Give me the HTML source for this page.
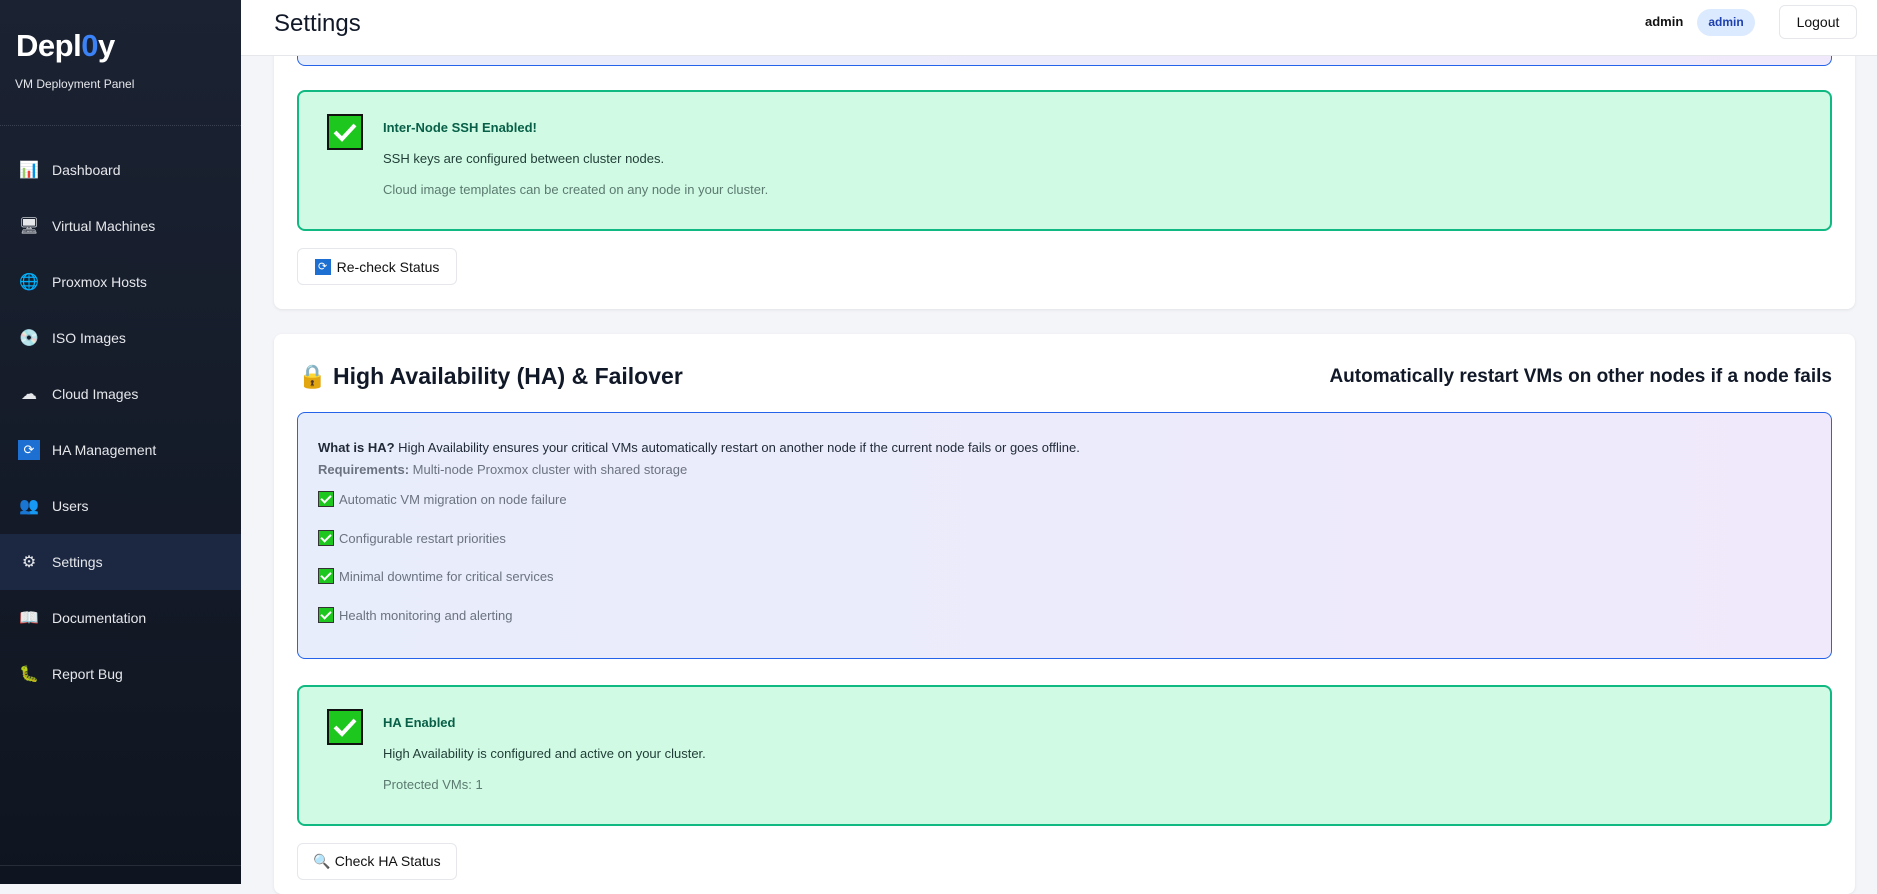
<!DOCTYPE html>
<html><head><meta charset="utf-8"><style>
*{box-sizing:border-box;margin:0;padding:0}
body{width:1877px;height:884px;overflow:hidden;font-family:"Liberation Sans",sans-serif;background:#f4f5f9;position:relative}
.sb{position:absolute;left:0;top:0;width:241px;height:884px;background:linear-gradient(#1b2232,#0f1520)}
.logo{position:absolute;left:16px;top:28px;font-size:31px;font-weight:900;color:#fff;letter-spacing:-0.5px;line-height:36px}
.logo span{color:#3b82f6}
.sub{position:absolute;left:15px;top:77px;font-size:12px;color:#e5e7eb}
.div{position:absolute;left:0;top:125px;width:241px;border-top:1px dotted #3a4252}
.nav{position:absolute;left:0;width:241px;height:56px;display:flex;align-items:center;color:#e5e7eb;font-size:14px}
.nav .ic{width:22px;height:20px;margin:0 12px 0 18px;display:flex;align-items:center;justify-content:center;font-size:16px}
.nav.act{background:#1c2842}
.hdr{position:absolute;left:241px;top:0;right:0;height:56px;background:#fff;border-bottom:1px solid #e5e7eb}
.hdr h1{position:absolute;left:33px;top:10px;font-size:24px;font-weight:500;color:#111827}
.un{position:absolute;left:1645px;top:14px;font-size:13px;font-weight:700;color:#111}
.badge{position:absolute;left:1697px;top:9px;width:58px;height:27px;border-radius:14px;background:#dbeafe;color:#1e40af;font-size:12px;font-weight:600;text-align:center;line-height:27px}
.lo{position:absolute;left:1779px;top:5px;width:78px;height:34px;border:1px solid #e5e7eb;border-radius:6px;background:#fff;font-size:14px;text-align:center;line-height:32px;color:#111}
.card{position:absolute;left:274px;width:1581px;background:#fff;border-radius:8px;box-shadow:0 1px 3px rgba(0,0,0,.08)}
.green{position:absolute;left:297px;width:1535px;height:141px;background:#d1fae5;border:2px solid #10b981;border-radius:8px}
.chk{position:absolute;left:28px;top:22px;width:36px;height:36px;background:#1ec71e;border:2px solid #111;display:flex;align-items:center;justify-content:center}
.gt{position:absolute;left:84px;font-size:13px;color:#065f46}
.btn{position:absolute;left:297px;width:160px;height:37px;background:#fff;border:1px solid #e5e7eb;border-radius:6px;font-size:14px;color:#111;display:flex;align-items:center;justify-content:center;gap:6px}
.blue{position:absolute;left:297px;top:412px;width:1535px;height:247px;border:1px solid #2563eb;border-radius:8px;background:linear-gradient(90deg,#e8edfb,#f0e9fb)}
.bt{position:absolute;left:20px;font-size:13px;color:#1f2937}
.cb{display:inline-block;width:16px;height:16px;background:#1ec71e;border:1.5px solid #333;vertical-align:-3px;margin-right:5px;position:relative}
.cb:after{content:"";position:absolute;left:4px;top:1px;width:4px;height:8px;border:solid #fff;border-width:0 2px 2px 0;transform:rotate(45deg)}
</style></head><body>
<div class="sb">
<div class="logo">Depl<span>0</span>y</div>
<div class="sub">VM Deployment Panel</div>
<div class="div"></div>
<div class="nav" style="top:142px"><div class="ic">📊</div>Dashboard</div>
<div class="nav" style="top:198px"><div class="ic">🖥</div>Virtual Machines</div>
<div class="nav" style="top:254px"><div class="ic">🌐</div>Proxmox Hosts</div>
<div class="nav" style="top:310px"><div class="ic">💿</div>ISO Images</div>
<div class="nav" style="top:366px"><div class="ic">☁</div>Cloud Images</div>
<div class="nav" style="top:422px"><div class="ic" style="background:#1d6fd1;color:#fff;font-size:13px">⟳</div>HA Management</div>
<div class="nav" style="top:478px"><div class="ic">👥</div>Users</div>
<div class="nav act" style="top:534px"><div class="ic">⚙</div>Settings</div>
<div class="nav" style="top:590px"><div class="ic">📖</div>Documentation</div>
<div class="nav" style="top:646px"><div class="ic">🐛</div>Report Bug</div>
<div style="position:absolute;left:0;top:865px;width:241px;border-top:1px solid #252c3a"></div>
</div>
<div class="card" style="top:-20px;height:329px"></div>
<div style="position:absolute;left:297px;top:40px;width:1535px;height:26px;border:1px solid #2563eb;border-top:none;border-radius:0 0 8px 8px;background:linear-gradient(90deg,#e8edfb,#f0e9fb)"></div>
<div class="hdr"><h1>Settings</h1></div>
<div class="un">admin</div><div class="badge">admin</div><div class="lo">Logout</div>
<div class="green" style="top:90px">
<div class="chk"><svg width="26" height="22" viewBox="0 0 26 22"><path d="M3 11 L10 18 L23 4" stroke="#fff" stroke-width="4" fill="none"/></svg></div>
<div class="gt" style="top:28px;font-weight:700">Inter-Node SSH Enabled!</div>
<div class="gt" style="top:59px;color:#1f3d36">SSH keys are configured between cluster nodes.</div>
<div class="gt" style="top:90px;color:#5b7a70">Cloud image templates can be created on any node in your cluster.</div>
</div>
<div class="btn" style="top:248px"><span style="display:inline-block;width:16px;height:16px;background:#1d6fd1;color:#fff;font-size:11px;line-height:16px;text-align:center">⟳</span>Re-check Status</div>
<div class="card" style="top:334px;height:560px"></div>
<div style="position:absolute;left:298px;top:363px;font-size:23px;font-weight:700;color:#111827">🔒 High Availability (HA) &amp; Failover</div>
<div style="position:absolute;right:45px;top:366px;font-size:19px;font-weight:600;color:#111827">Automatically restart VMs on other nodes if a node fails</div>
<div class="blue">
<div class="bt" style="top:27px"><b>What is HA?</b> High Availability ensures your critical VMs automatically restart on another node if the current node fails or goes offline.</div>
<div class="bt" style="top:49px;color:#6b7280"><b>Requirements:</b> Multi-node Proxmox cluster with shared storage</div>
<div class="bt" style="top:78px;color:#6b7280"><span class="cb"></span>Automatic VM migration on node failure</div>
<div class="bt" style="top:117px;color:#6b7280"><span class="cb"></span>Configurable restart priorities</div>
<div class="bt" style="top:155px;color:#6b7280"><span class="cb"></span>Minimal downtime for critical services</div>
<div class="bt" style="top:194px;color:#6b7280"><span class="cb"></span>Health monitoring and alerting</div>
</div>
<div class="green" style="top:685px">
<div class="chk"><svg width="26" height="22" viewBox="0 0 26 22"><path d="M3 11 L10 18 L23 4" stroke="#fff" stroke-width="4" fill="none"/></svg></div>
<div class="gt" style="top:28px;font-weight:700">HA Enabled</div>
<div class="gt" style="top:59px;color:#1f3d36">High Availability is configured and active on your cluster.</div>
<div class="gt" style="top:90px;color:#5b7a70">Protected VMs: 1</div>
</div>
<div class="btn" style="top:843px">🔍 Check HA Status</div>
</body></html>
